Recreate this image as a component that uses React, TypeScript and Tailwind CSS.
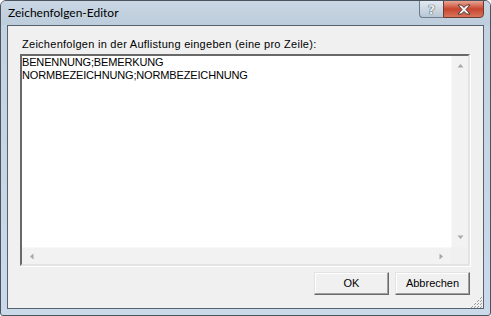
import React from "react";

const Arrow = ({ dir }: { dir: "up" | "down" | "left" | "right" }) => {
  const pts: Record<string, string> = {
    up: "0.5,4.5 3.5,1 6.5,4.5",
    down: "0.5,0.5 3.5,4 6.5,0.5",
    left: "4.5,0.5 1,3.5 4.5,6.5",
    right: "0.5,0.5 4,3.5 0.5,6.5",
  };
  const vert = dir === "up" || dir === "down";
  return (
    <svg width={vert ? 7 : 5} height={vert ? 5 : 7} viewBox={vert ? "0 0 7 5" : "0 0 5 7"}>
      <polygon points={pts[dir]} fill="#a8a8a8" />
    </svg>
  );
};

export default function App() {
  const sans = { fontFamily: '"Liberation Sans", Arial, sans-serif' };
  return (
    <div className="w-[491px] h-[316px] bg-white">
      <div className="w-[491px] h-[316px] flex flex-col border border-[#4b535c] rounded-t-[6px] rounded-b-[3px] bg-gradient-to-b from-[#c3d2e1] to-[#cbdaea] overflow-hidden">
        {/* title bar */}
        <div className="h-[24px] flex items-start relative bg-gradient-to-b from-[#c9d6e3] to-[#bdcddc]">
          <span
            className="pl-[7px] pt-[4px] text-[12px] leading-[16px] text-black"
            style={{ fontFamily: 'Lato, "Segoe UI", sans-serif' }}
          >
            Zeichenfolgen-Editor
          </span>
          <div className="ml-auto mr-[6px] flex -mt-[1px]">
            <div className="w-[24px] h-[18px] border border-[#6f7b88] border-r-0 rounded-bl-[4px] bg-gradient-to-b from-[#e2e9f1] via-[#cdd8e4] to-[#b8c6d4] flex items-center justify-center">
              <span
                className="text-[13px] leading-[13px] font-bold text-[#e9eef3] [text-shadow:0_0_1px_#3a4048,0_0_1px_#3a4048]"
                style={{ fontFamily: '"DejaVu Sans", sans-serif' }}
              >
                ?
              </span>
            </div>
            <div className="w-[41px] h-[18px] border border-[#6e3a32] rounded-br-[4px] bg-gradient-to-b from-[#e6a595] via-[#c7442d] to-[#d5745a] flex items-center justify-center">
              <svg width="14" height="11" viewBox="0 0 14 11">
                <path
                  d="M1 1 H4.5 L7 3.5 L9.5 1 H13 L9 5.5 L13 10 H9.5 L7 7.5 L4.5 10 H1 L5 5.5 Z"
                  fill="#f4f4f4"
                  stroke="#4a2a26"
                  strokeWidth="0.9"
                  strokeLinejoin="round"
                />
              </svg>
            </div>
          </div>
        </div>
        {/* client */}
        <div className="mx-[6px] mb-[6px] h-[284px] border border-[#56616d] bg-[#f0f0f0] relative">
          <div className="flex flex-col pl-[12px] pr-[13px] pt-[12px]" style={sans}>
            <div className="pl-[2px] text-[11px] leading-[13px] tracking-[0.27px] text-black">
              Zeichenfolgen in der Auflistung eingeben (eine pro Zeile):
            </div>
            <div className="mt-[3px] h-[212px] border-2 border-t-[#696969] border-l-[#696969] border-r-[#e3e3e3] border-b-[#e3e3e3] shadow-[1px_1px_0_#ffffff] bg-white grid grid-cols-[1fr_17px] grid-rows-[1fr_17px]">
              <div className="text-[11px] leading-[13px] tracking-[-0.15px] text-black whitespace-pre">
                {"BENENNUNG;BEMERKUNG\nNORMBEZEICHNUNG;NORMBEZEICHNUNG"}
              </div>
              <div className="bg-[#f2f2f2] border-l border-[#f8f8f8] flex flex-col items-center justify-between py-[7px]">
                <Arrow dir="up" />
                <Arrow dir="down" />
              </div>
              <div className="bg-[#f2f2f2] border-t border-[#f8f8f8] flex items-center justify-between px-[7px]">
                <Arrow dir="left" />
                <Arrow dir="right" />
              </div>
              <div className="bg-[#f0f0f0]" />
            </div>
            <div className="mt-[6px] flex justify-end gap-[6px]">
              <button className="w-[75px] h-[23px] border border-t-[#e3e3e3] border-l-[#e3e3e3] border-r-[#696969] border-b-[#696969] shadow-[inset_-1px_-1px_0_#a0a0a0,inset_1px_1px_0_#ffffff] bg-[#f0f0f0] text-[11px] text-black flex items-center justify-center">
                OK
              </button>
              <button className="w-[75px] h-[23px] border border-t-[#e3e3e3] border-l-[#e3e3e3] border-r-[#696969] border-b-[#696969] shadow-[inset_-1px_-1px_0_#a0a0a0,inset_1px_1px_0_#ffffff] bg-[#f0f0f0] text-[11px] text-black flex items-center justify-center">
                Abbrechen
              </button>
            </div>
          </div>
          <svg className="absolute right-0 bottom-0" width="13" height="13" viewBox="0 0 13 13">
            {[
              [11, 2], [11, 5], [11, 8], [11, 11],
              [8, 5], [8, 8], [8, 11],
              [5, 8], [5, 11],
              [2, 11],
            ].map(([x, y], i) => (
              <g key={i}>
                <rect x={x} y={y} width="1" height="1" fill="#9a9a9a" />
                <rect x={x - 1} y={y + 1} width="1" height="1" fill="#9a9a9a" />
              </g>
            ))}
          </svg>
        </div>
      </div>
    </div>
  );
}
